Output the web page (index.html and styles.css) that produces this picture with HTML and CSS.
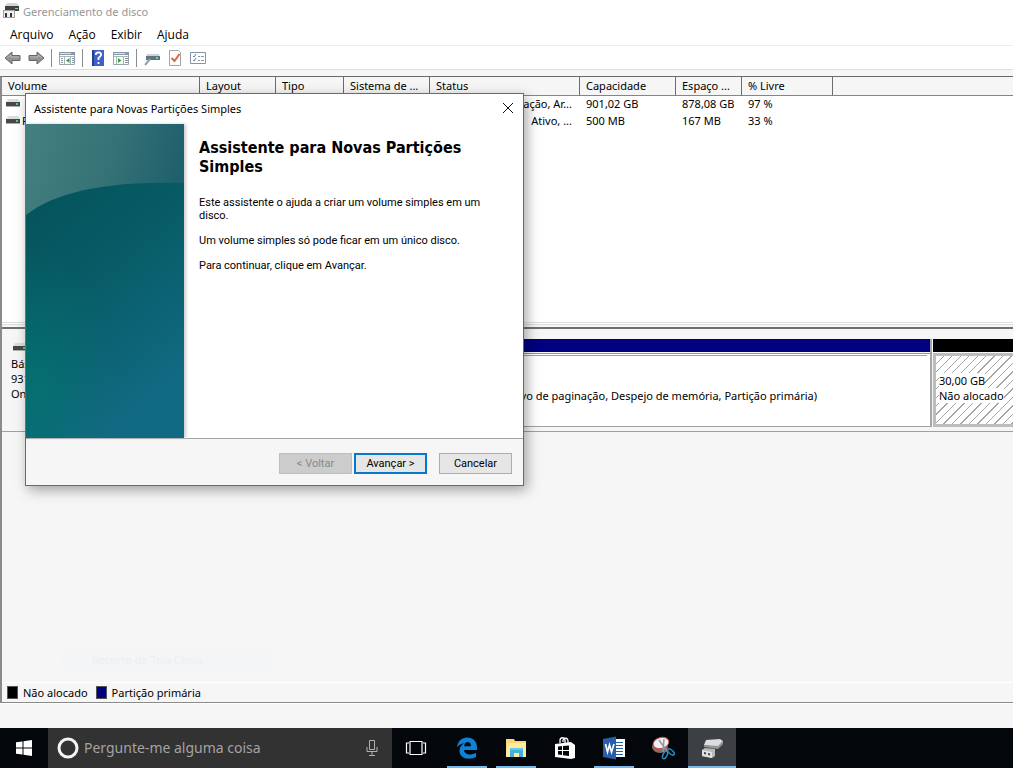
FILE: index.html
```html
<!DOCTYPE html>
<html lang="pt-BR">
<head>
<meta charset="utf-8">
<title>Gerenciamento de disco</title>
<link rel="stylesheet" href="styles.css">
</head>
<body>
<svg class="symbols" aria-hidden="true">
  <symbol id="drive" viewBox="0 0 14 10">
    <path d="M2 1h10l2 3H0z" fill="#dcdedd"/><path d="M0 4h14v4H0z" fill="#454948"/><path d="M0 8h14v1H0z" fill="#a9adab"/><path d="M10 5h2v2h-2z" fill="#59c98c"/>
  </symbol>
</svg>
<main class="window">
  <header class="titlebar">
    <svg class="title-icon" viewBox="0 0 16 16"><path d="M4 0h10l2 3H2z" fill="#d5d7d7"/><path d="M2 3h14v5H2z" fill="#3f4443"/><path d="M12 5h3v1h-3z" fill="#7fd0a4"/><path d="M0 7h12v8H0z" fill="#a0a0a0"/><path d="M1 8h10v6H1z" fill="#f0f0f0"/><path d="M2 10h2v4H2zM7 10h2v4H7z" fill="#333"/></svg>
    <span>Gerenciamento de disco</span>
  </header>
  <nav class="menubar">
    <button>Arquivo</button><button>Ação</button><button>Exibir</button><button>Ajuda</button>
  </nav>
  <div class="toolbar">
    <button aria-label="Voltar"><svg viewBox="0 0 18 18"><path d="M1 9l7-6v3.500h8v5H8V15z" fill="#929292" stroke="#666"/><path d="M3 9l4-3v2h8" fill="none" stroke="#b8b8b8"/></svg></button>
    <button aria-label="Encaminhar"><svg viewBox="0 0 18 18"><path d="M17 9l-7-6v3.500H2v5h8V15z" fill="#929292" stroke="#666"/><path d="M3 8h8V6l4 3" fill="none" stroke="#b8b8b8"/></svg></button>
    <i class="separator"></i>
    <button aria-label="Mostrar árvore"><svg viewBox="0 0 18 18"><path d="M1.500 3.500h15v12h-15z" fill="#fff" stroke="#9aa4ac"/><path d="M1 3h16v3H1z" fill="#8b99a6"/><path d="M2 4.500h11" stroke="#dde3e7"/><path d="M2 7.500h14M6.500 8v7M12.500 8v7" stroke="#aab4bc"/><path d="M3 9.500h2M3 11.500h2M3 13.500h2M14 9.500h2M14 11.500h2M14 13.500h2" stroke="#8393a2"/><path d="M11.500 9v5L8 11.500z" fill="#2fa53b"/></svg></button>
    <i class="separator"></i>
    <button aria-label="Ajuda"><svg viewBox="0 0 18 18"><path d="M3 1h12v16H3z" fill="#3f62c4"/><path d="M3 1h2v16H3z" fill="#253f91"/><path d="M7 6V4.500l1.500-1h2l1.500 1v2L9.500 9v2M9.500 13v2" fill="none" stroke="#fff" stroke-width="1.800"/></svg></button>
    <button aria-label="Mostrar painel"><svg viewBox="0 0 18 18"><path d="M1.500 3.500h15v12h-15z" fill="#fff" stroke="#9aa4ac"/><path d="M1 3h16v3H1z" fill="#8b99a6"/><path d="M2 4.500h11" stroke="#dde3e7"/><path d="M2 7.500h14M4.500 8v7M11.500 8v7" stroke="#aab4bc"/><path d="M13 9.500h3M13 11.500h3M13 13.500h3" stroke="#8393a2"/><path d="M6 9v5l3.500-2.500z" fill="#2fa53b"/></svg></button>
    <i class="separator"></i>
    <button aria-label="Atualizar"><svg viewBox="0 0 18 18"><path d="M4 5h12l1 3H3z" fill="#ccd4d8"/><path d="M3 7h14v4H3z" fill="#5f7480"/><path d="M13 8h2v2h-2z" fill="#6bd79c"/><path d="M7 10l-5 6" stroke="#8aa4b7" stroke-width="2"/></svg></button>
    <button aria-label="Propriedades"><svg viewBox="0 0 18 18"><path d="M3.500 1.500h9l2 2v13h-11z" fill="#fff" stroke="#a6a6a6"/><path d="M5.500 9l3 3 5-7" fill="none" stroke="#e0643c" stroke-width="2"/></svg></button>
    <button aria-label="Configurações"><svg viewBox="0 0 18 18"><path d="M1.500 3.500h15v11h-15z" fill="#fff" stroke="#8795a2"/><path d="M4 7l1 1 2-3M4 11l1 1 2-3" fill="none" stroke="#5681a3"/><path d="M9 7.500h2M12 7.500h3M9 11.500h2M12 11.500h3" stroke="#8997a2"/></svg></button>
  </div>
  <section class="workspace">
    <div class="volumes">
      <table>
        <colgroup><col class="c-volume"><col class="c-layout"><col class="c-type"><col class="c-system"><col class="c-status"><col class="c-capacity"><col class="c-space"><col class="c-free"><col></colgroup>
        <thead><tr><th>Volume</th><th>Layout</th><th>Tipo</th><th>Sistema de ...</th><th>Status</th><th>Capacidade</th><th>Espaço ...</th><th>% Livre</th><th></th></tr></thead>
        <tbody>
          <tr><td class="name"><svg class="drive"><use href="#drive"/></svg></td><td></td><td></td><td></td><td class="status">nação, Ar...</td><td>901,02 GB</td><td>878,08 GB</td><td>97 %</td><td></td></tr>
          <tr><td class="name"><svg class="drive"><use href="#drive"/></svg>R</td><td></td><td></td><td></td><td class="status">Ativo, ...</td><td>500 MB</td><td>167 MB</td><td>33 %</td><td></td></tr>
        </tbody>
      </table>
    </div>
    <div class="disks">
      <div class="disk-row">
        <div class="disk-label"><svg class="drive"><use href="#drive"/></svg><span>Bás</span><span>931</span><span>Onl</span></div>
        <div class="partition primary"><div class="stripe"></div><div class="partition-body"><div class="details">Arquivo de paginação, Despejo de memória, Partição primária)</div></div></div>
        <div class="partition free"><div class="stripe"></div><div class="partition-body"><span>30,00 GB</span><span>Não alocado</span></div></div>
      </div>
      <div class="empty"><span class="ghost">Recorte de Tela Cheia</span></div>
      <div class="legend"><i class="swatch black"></i><span>Não alocado</span><i class="swatch navy"></i><span>Partição primária</span></div>
    </div>
  </section>
  <div class="statusbar"></div>
</main>

<section class="dialog" role="dialog" aria-labelledby="dialog-title">
  <header class="dialog-title"><span id="dialog-title">Assistente para Novas Partições Simples</span><button aria-label="Fechar"><svg viewBox="0 0 12 12"><path d="M1 1l10 10M11 1L1 11" stroke="#111"/></svg></button></header>
  <div class="dialog-content">
    <svg class="banner" viewBox="0 0 158 314" preserveAspectRatio="none">
      <defs>
        <linearGradient id="sky" x1="0" y1="0" x2="1" y2=".5"><stop stop-color="#448080"/><stop offset=".5" stop-color="#347175"/><stop offset="1" stop-color="#15586a"/></linearGradient>
        <linearGradient id="sea" x1="0" y1="0" x2=".5" y2="1"><stop stop-color="#035258"/><stop offset=".5" stop-color="#085d68"/><stop offset="1" stop-color="#116a83"/></linearGradient>
        <radialGradient id="glow" cx="0" cy=".8" r=".55"><stop stop-color="#007a70" stop-opacity=".6"/><stop offset="1" stop-color="#007a70" stop-opacity="0"/></radialGradient>
      </defs>
      <path d="M0 0h158v314H0z" fill="url(#sky)"/><path d="M0 91C32 66 87 57 158 59v255H0z" fill="url(#sea)"/><path d="M0 91C32 66 87 57 158 59v255H0z" fill="url(#glow)"/>
    </svg>
    <div class="copy">
      <h1>Assistente para Novas Partições Simples</h1>
      <p>Este assistente o ajuda a criar um volume simples em um disco.</p>
      <p>Um volume simples só pode ficar em um único disco.</p>
      <p>Para continuar, clique em Avançar.</p>
    </div>
  </div>
  <footer class="actions"><button disabled>&lt; Voltar</button><button class="next">Avançar &gt;</button><button class="cancel">Cancelar</button></footer>
</section>

<nav class="taskbar" aria-label="Barra de tarefas">
  <button class="start" aria-label="Iniciar"><svg viewBox="0 0 16 16"><path d="M0 2.300L6.500 1.400v6H0zM7.500 1.200L16 0v7.400H7.500zM0 8.500h6.500v6L0 13.700zM7.500 8.500H16V16l-8.500-1.200z" fill="#fff"/></svg></button>
  <label class="search"><svg class="ring" viewBox="0 0 22 22"><circle cx="11" cy="11" r="9" fill="none" stroke="#f4f4f4" stroke-width="3"/></svg><input type="text" placeholder="Pergunte-me alguma coisa" aria-label="Pesquisar"><svg class="mic" viewBox="0 0 12 18"><path d="M3.500 1.500h5v9h-5zM1 8v4.500h10V8M6 13v4M3 16.500h6" fill="none" stroke="#b0b0b0"/></svg></label>
  <button class="task view" aria-label="Visão de tarefas"><svg class="wide" viewBox="0 0 22 16"><path d="M5 1.500h12v13H5zM4 3H1.500v10H4M18 3h2.500v10H18" fill="none" stroke="#fff" stroke-width="1.200"/></svg></button>
  <button class="task open" aria-label="Edge"><svg viewBox="0 0 24 24"><path d="M2 11C3 5 7 1.500 12 1.500c6 0 10 4 10 10v2.500H9c.3 3 3 4.500 6 4.500 2 0 4-.6 6-1.500v4c-2 1.200-4.500 1.700-7 1.700-6 0-9.500-3.500-9.500-8 0-3.500 2-6 5-7.500C6 7.700 4 9 2 11zm7.200-.8H16C16 7.500 14.500 6 12.500 6c-2 0-3 1.700-3.300 4.200z" fill="#0d82d8"/></svg></button>
  <button class="task open" aria-label="Explorador"><svg viewBox="0 0 24 24"><path d="M2 3h8l1 2h11v16H2z" fill="#f8d775"/><path d="M3 7h19v14H2z" fill="#ffeaa0"/><path d="M6 12h13v9h-4v-4h-5v4H6z" fill="#42b1dc"/><path d="M6 12h13v2H6z" fill="#68c7e8"/></svg></button>
  <button class="task" aria-label="Loja"><svg viewBox="0 0 24 24"><path d="M7 7V4c0-3 5-3 5 0v3M10 6V4c2-3 5-2 5 1v2" fill="none" stroke="#fff" stroke-width="1.300"/><path d="M2 8l16-2 4 3v13l-4 1-16-2z" fill="#fff"/><path d="M5 10.500l4-.4v4H5zM10 10l6-.6V14h-6zM5 15h4v4l-4-.5zM10 15h6v5l-6-.7z" fill="#050609"/></svg></button>
  <button class="task open" aria-label="Word"><svg viewBox="0 0 24 24"><path d="M13 3h10v18H13z" fill="#fff"/><path d="M14 6.500h7M14 9.500h7M14 12.500h7M14 15.500h7M14 18.500h7" stroke="#295ea8"/><path d="M1 3l13-2.500v23L1 21z" fill="#295ea8"/><path d="M3.500 8l2 8 2-7 2 7L12 8" fill="none" stroke="#fff" stroke-width="1.700"/></svg></button>
  <button class="task" aria-label="Ferramenta de captura"><svg viewBox="0 0 24 24"><ellipse cx="9" cy="11" rx="8" ry="6" fill="#8d6864"/><ellipse cx="10" cy="7" rx="8" ry="5.500" fill="#f4f0ef" stroke="#c95050" transform="rotate(-15 10 7)"/><path d="M8 4l8 11M13 3l-1 13" stroke="#889ba5" stroke-width="1.500"/><ellipse cx="14" cy="19" rx="2" ry="4" transform="rotate(25 14 19)" fill="none" stroke="#318abc" stroke-width="1.500"/><ellipse cx="20" cy="16" rx="2" ry="4" transform="rotate(-50 20 16)" fill="none" stroke="#318abc" stroke-width="1.500"/></svg></button>
  <button class="task open active" aria-label="Gerenciamento de disco"><svg viewBox="0 0 24 24"><path d="M6 4l14-1 3 2-5 6-14-2z" fill="#ddd"/><path d="M4 9l14 1 5-5v3l-5 5-14-2z" fill="#969696"/><path d="M2 14l3-2 10 1v7l-3 2-10-2z" fill="#b9b9b9"/><path d="M2 14l10 2v6L2 20z" fill="#e1e1e1"/><path d="M4 16l2 .5v2L4 18zM8 17l2 .5v2L8 19z" fill="#444"/></svg></button>
</nav>
</body>
</html>
```
FILE: styles.css
```css
* { box-sizing: border-box; }
body { margin: 0; min-height: 100vh; display: flex; flex-direction: column; position: relative; background: #f6f6f6; color: #000; font: 11px/15px "Noto Sans", "Open Sans", sans-serif; }
button { border: 0; padding: 0; background: none; font: inherit; color: inherit; }
svg { display: block; }
.symbols { position: absolute; width: 0; height: 0; }
.window { flex: 1; display: flex; flex-direction: column; }
.titlebar { height: 24px; display: flex; align-items: center; gap: 4px; padding: 0 0 2px 3px; background: #fff; color: #969696; }
.title-icon { width: 16px; height: 16px; }
.menubar { height: 22px; display: flex; align-items: center; gap: 15px; padding: 0 0 1px 10px; background: #fff; border-bottom: 1px solid #ededed; font: 12px/15px "Open Sans", "Noto Sans", sans-serif; }
.toolbar { height: 24px; display: flex; align-items: center; gap: 5px; padding-left: 4px; background: #fff; border-bottom: 1px solid #dedede; }
.toolbar svg { width: 18px; height: 18px; }
.separator { width: 1px; height: 18px; margin: 0 1px; background: #8c8c8c; }
.workspace { flex: 1; display: flex; flex-direction: column; margin-top: 6px; border-left: 2px solid #8b8b8b; border-bottom: 1px solid #8b8b8b; border-top: 1px solid #696969; }
.volumes { height: 248px; background: #fff; border-bottom: 3px double #ddd; }
table { width: 100%; table-layout: fixed; border-collapse: separate; border-spacing: 0; }
th { height: 19px; padding: 0 0 1px 6px; text-align: left; font-weight: 400; white-space: nowrap; background: #f6f6f6; border-left: 1px solid #6d6d6d; border-bottom: 1px solid #858585; }
th:first-child { border-left: 0; }
td { height: 17px; padding: 0 0 2px 7px; white-space: nowrap; }
.c-volume { width: 197px; } .c-layout { width: 76px; } .c-type { width: 68px; } .c-system { width: 86px; } .c-status { width: 150px; } .c-capacity { width: 96px; } .c-space { width: 66px; } .c-free { width: 91px; }
.status { text-align: right; padding-right: 7px; }
.drive { width: 14px; height: 10px; }
.name { padding-left: 4px; }
.name .drive { display: inline-block; margin-right: 2px; }
.disks { flex: 1; display: flex; flex-direction: column; margin-top: 2px; border-top: 2px solid #707070; }
.disk-row { height: 103px; display: flex; padding: 10px 0 4px; border-bottom: 1px solid #a0a0a0; }
.disk-label { width: 120px; display: flex; flex-direction: column; padding: 3px 0 0 9px; }
.disk-label .drive { margin: 0 0 4px 2px; }
.partition { display: flex; flex-direction: column; }
.stripe { height: 13px; margin-bottom: 1px; }
.partition-body { flex: 1; display: flex; flex-direction: column; }
.primary { flex: 1; border-right: 2px solid #a6a6a6; }
.primary .stripe { background: #000080; }
.primary .partition-body { padding: 1px 3px 0 0; background: #fff; border-top: 1px solid #9292ae; border-bottom: 1px solid #a0a0a0; }
.details { flex: 1; padding: 32px 110px 0 0; text-align: right; white-space: nowrap; border-top: 1px solid #a0a0ac; }
.free { width: 80px; margin-left: 1px; }
.free .stripe { background: #000; }
.free .partition-body { align-items: flex-start; justify-content: center; border: 3px solid #bdbdbd; border-right: 0; padding: 0 0 5px 3px; background: repeating-linear-gradient(135deg, #fff 0 5px, #a4a4a4 5px 6px); }
.free span { background: #fff; white-space: nowrap; }
.empty { flex: 1; display: flex; align-items: flex-end; padding: 0 0 12px 59px; }
.ghost { width: 213px; padding: 3px 0 3px 31px; background: #f4f5f7; color: #eeefef; }
.legend { height: 20px; display: flex; align-items: center; gap: 5px; padding-left: 5px; border-top: 1px solid #fff; }
.swatch { width: 11px; height: 13px; border: 1px solid #555; }
.black { background: #000; }
.navy { margin-left: 3px; background: #000080; }
.statusbar { height: 25px; border-top: 1px solid #fff; }
.dialog { position: absolute; left: 25px; top: 93px; width: 499px; background: #fff; border: 1px solid #1b82bb; box-shadow: 3px 4px 12px rgba(0, 0, 0, .35); }
.dialog-title { height: 30px; display: flex; align-items: center; justify-content: space-between; padding: 0 9px 2px 8px; }
.dialog-title svg { width: 12px; height: 12px; }
.dialog-content { display: flex; min-height: 314px; }
.banner { width: 158px; height: 314px; box-shadow: 2px 0 3px #ccc; }
.copy { flex: 1; padding: 14px 24px 0 15px; font: 11px/13px Roboto, "Liberation Sans", sans-serif; }
h1 { margin: 0 0 20px; font: 700 16px/19px "DejaVu Sans Condensed", "Noto Sans", sans-serif; }
p { margin: 0 0 12px; }
.actions { height: 47px; display: flex; justify-content: flex-end; align-items: center; padding: 3px 11px 0 0; gap: 2px; background: #f6f6f6; border-top: 1px solid #a4a4a4; }
.actions button { width: 73px; height: 21px; background: #e6e6e6; border: 1px solid #adadad; font: 11px/15px Roboto, "Liberation Sans", sans-serif; }
.actions button:disabled { background: #cccccc; border-color: #bfbfbf; color: #898989; }
.actions .next { border: 2px solid #0878cb; }
.actions .cancel { margin-left: 10px; }
.taskbar { height: 40px; display: flex; background: #03070c; }
.start { width: 48px; display: grid; place-items: center; }
.start svg { width: 16px; height: 16px; }
.search { width: 344px; display: flex; align-items: center; gap: 5px; padding: 0 14px 0 9px; background: #323232; }
.ring { width: 22px; height: 22px; }
.search input { flex: 1; min-width: 0; padding: 0; border: 0; outline: 0; background: transparent; color: #a8a8a8; font: 14px/20px "Noto Sans", "Open Sans", sans-serif; }
.search input::placeholder { color: #a3a3a3; opacity: 1; }
.mic { width: 12px; height: 18px; }
.task { width: 48px; margin-right: 1px; display: grid; place-items: center; }
.view { margin-right: 3px; }
.task svg { width: 24px; height: 24px; }
.task .wide { width: 22px; height: 16px; }
.open { background: linear-gradient(#76b9ed, #76b9ed) center bottom / 40px 2px no-repeat; }
.active { background-color: #3c3f43; background-size: 48px 2px; }
```
